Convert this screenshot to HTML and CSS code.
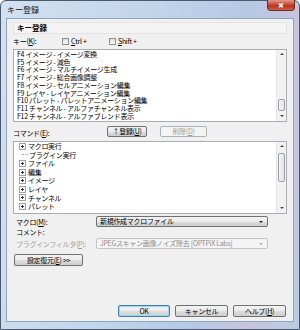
FILE: index.html
```html
<!DOCTYPE html>
<html lang="ja">
<head>
    <meta charset="UTF-8">
    <title>キー登録</title>
    <link rel="stylesheet" href="styles.css">
</head>
<body>
    <div class="window">
        <div class="titlebar">
            <span class="title">キー登録</span>
            <span class="close-btn">&#10006;</span>
        </div>
        <div class="client">
            <div class="caption">キー登録</div>

            <div class="key-row">
                <span class="label">キー(<u>K</u>):</span>
                <span class="check"><span class="box"></span><u>C</u>trl +</span>
                <span class="check"><span class="box"></span><u>S</u>hift +</span>
            </div>

            <div class="listbox">
                <div class="items">
                    <div>F4 イメージ - イメージ変換</div>
                    <div>F5 イメージ - 減色</div>
                    <div>F6 イメージ - マルチイメージ生成</div>
                    <div>F7 イメージ - 総合画像調整</div>
                    <div>F8 イメージ - セルアニメーション編集</div>
                    <div>F9 レイヤ - レイヤアニメーション編集</div>
                    <div>F10 パレット - パレットアニメーション編集</div>
                    <div>F11 チャンネル - アルファチャンネル表示</div>
                    <div>F12 チャンネル - アルファブレンド表示</div>
                </div>
                <div class="vscroll">
                    <span class="arrow up"></span>
                    <span class="track"><span class="thumb thumb-bottom"></span></span>
                    <span class="arrow down"></span>
                </div>
            </div>

            <div class="cmd-row">
                <span class="label">コマンド(<u>E</u>):</span>
                <span class="btn btn-add">↑登録(<u>U</u>)</span>
                <span class="btn btn-del disabled">削除(<u>D</u>)</span>
            </div>

            <div class="listbox tree">
                <div class="items">
                    <div class="node"><span class="plus"></span>マクロ実行</div>
                    <div class="node"><span class="leaf"></span>プラグイン実行</div>
                    <div class="node"><span class="plus"></span>ファイル</div>
                    <div class="node"><span class="plus"></span>編集</div>
                    <div class="node"><span class="plus"></span>イメージ</div>
                    <div class="node"><span class="plus"></span>レイヤ</div>
                    <div class="node"><span class="plus"></span>チャンネル</div>
                    <div class="node"><span class="plus"></span>パレット</div>
                </div>
                <div class="vscroll">
                    <span class="arrow up"></span>
                    <span class="track"><span class="thumb thumb-top"></span></span>
                    <span class="arrow down"></span>
                </div>
            </div>

            <div class="form-row first">
                <span class="flabel">マクロ(<u>M</u>):</span>
                <span class="combo">新規作成マクロファイル<span class="drop"></span></span>
            </div>
            <div class="form-row comment">
                <span class="flabel">コメント:</span>
            </div>
            <div class="form-row">
                <span class="flabel disabled">プラグインフィルタ(<u>P</u>):</span>
                <span class="combo disabled">JPEGスキャン画像ノイズ除去 [OPTPiX Labs]<span class="drop"></span></span>
            </div>

            <div class="restore-row">
                <span class="btn btn-restore">設定復元(<u>E</u>) &gt;&gt;</span>
            </div>

            <div class="footer">
                <span class="btn btn-ok">OK</span>
                <span class="btn btn-foot">キャンセル</span>
                <span class="btn btn-foot">ヘルプ(<u>H</u>)</span>
            </div>
        </div>
    </div>
</body>
</html>
```

FILE: styles.css
```css
body {
    margin: 0;
    padding: 0;
    font-family: "Noto Sans CJK JP", "Liberation Sans", sans-serif;
    font-size: 7px;
    letter-spacing: -0.3px;
    color: #000;
    background: #fff;
}

u {
    text-decoration: underline;
}

.window {
    width: 300px;
    height: 330px;
    box-sizing: border-box;
    border: 1px solid #4b5a6e;
    border-radius: 6px 6px 0 0;
    background: linear-gradient(100deg, #d3e1f0 0%, #c2d6ec 40%, #b5c9e4 70%, #c9c3de 85%, #b9cde6 100%);
    display: flex;
    flex-direction: column;
    position: relative;
}

.titlebar {
    height: 17px;
    position: relative;
}

.title {
    position: absolute;
    left: 6px;
    top: 3px;
    font-size: 8px;
    letter-spacing: 0;
    color: #111;
}

/* close button sits over the frame */
.close-btn {
    position: absolute;
    right: 4px;
    top: -1px;
    width: 28px;
    height: 11px;
    box-sizing: border-box;
    border: 1px solid #6d2d23;
    border-top: none;
    border-radius: 0 0 4px 4px;
    background: linear-gradient(#e09a8c, #c94a38 45%, #b8331f 60%, #d0604a);
    color: #fff;
    font-size: 7px;
    line-height: 10px;
    text-align: center;
}

.client {
    flex: 1;
    margin: 0 5px 7px 5px;
    border: 1px solid #8ea4bf;
    background: #f0f0f0;
    display: flex;
    flex-direction: column;
    padding: 3px 6px 4px 6px;
    box-sizing: border-box;
}

.caption {
    height: 10px;
    line-height: 10px;
    border: 1px solid #e3e3e3;
    background: #f4f4f4;
    padding-left: 3px;
    font-weight: bold;
    font-size: 7.5px;
    letter-spacing: 0;
}

.key-row {
    display: flex;
    align-items: flex-end;
    height: 10px;
    margin-top: 2px;
}

.key-row .label {
    width: 49px;
}

.check {
    display: flex;
    align-items: center;
    width: 47px;
}

.box {
    width: 5px;
    height: 5px;
    border: 1px solid #8f8f8f;
    background: linear-gradient(#dcdcdc, #fbfbfb);
    margin-right: 2px;
}

.listbox {
    margin-top: 3px;
    height: 73px;
    box-sizing: border-box;
    border: 1px solid #abadb3;
    background: #fff;
    display: flex;
}

.items {
    flex: 1;
    padding: 1px 0 0 3px;
    line-height: 7.7px;
    overflow: hidden;
    white-space: nowrap;
}

.vscroll {
    width: 9px;
    background: #f2f2f2;
    border-left: 1px solid #e6e6e6;
    display: flex;
    flex-direction: column;
}

.arrow {
    height: 9px;
    position: relative;
}

.arrow::after {
    content: "";
    position: absolute;
    left: 3px;
    top: 3px;
    border-left: 2px solid transparent;
    border-right: 2px solid transparent;
}

.arrow.up::after {
    border-bottom: 2px solid #444;
}

.arrow.down::after {
    border-top: 2px solid #444;
}

.track {
    flex: 1;
    display: flex;
    flex-direction: column;
}

.thumb {
    height: 10px;
    margin: 0 1px;
    border: 1px solid #9aa0a8;
    border-radius: 2px;
    background: linear-gradient(90deg, #f3f3f3, #e3e3e3);
}

.thumb-bottom {
    margin-top: auto;
    margin-bottom: 1px;
}

.thumb-top {
    height: 27px;
    margin-top: 2px;
}

.cmd-row {
    display: flex;
    align-items: flex-end;
    margin-top: 4px;
    height: 11px;
}

.cmd-row .label {
    width: 94px;
    line-height: 8px;
}

.btn {
    box-sizing: border-box;
    height: 11px;
    border: 1px solid #707070;
    border-radius: 2px;
    background: linear-gradient(#f2f2f2 0%, #ebebeb 50%, #dddddd 51%, #cfcfcf 100%);
    display: flex;
    align-items: center;
    justify-content: center;
    line-height: 9px;
    white-space: nowrap;
}

.btn-add {
    width: 40px;
}

.btn-del {
    width: 47px;
    margin-left: 13px;
}

.btn.disabled {
    border-color: #adb2b5;
    background: #f4f4f4;
    color: #a0a0a0;
}

.tree {
    margin-top: 4px;
}

.tree .items {
    line-height: 8.6px;
    padding-left: 5px;
    padding-top: 0;
}

.node {
    display: flex;
    align-items: center;
}

.plus {
    width: 5px;
    height: 5px;
    border: 1px solid #a0a0a0;
    margin-right: 2px;
    position: relative;
    background: #fff;
}

.plus::before {
    content: "";
    position: absolute;
    left: 1px;
    top: 2px;
    width: 3px;
    height: 1px;
    background: #333;
}

.plus::after {
    content: "";
    position: absolute;
    left: 2px;
    top: 1px;
    width: 1px;
    height: 3px;
    background: #333;
}

.leaf {
    width: 6px;
    height: 1px;
    margin-left: 3px;
    margin-right: 1px;
    border-top: 1px dotted #a0a0a0;
}

.form-row {
    display: flex;
    align-items: center;
    height: 11px;
    padding-left: 3px;
}

.form-row.first {
    margin-top: 2px;
}

.form-row.comment {
    height: 10px;
    margin-bottom: 1px;
}

.flabel {
    width: 80px;
}

.flabel.disabled {
    color: #a0a0a0;
}

.combo {
    width: 172px;
    height: 11px;
    box-sizing: border-box;
    border: 1px solid #707070;
    border-radius: 2px;
    background: linear-gradient(#f2f2f2 0%, #ebebeb 50%, #dddddd 51%, #cfcfcf 100%);
    padding-left: 3px;
    line-height: 9px;
    position: relative;
    white-space: nowrap;
}

.combo.disabled {
    border-color: #c4c4c4;
    background: #f4f4f4;
    color: #8d8d8d;
}

.drop {
    position: absolute;
    right: 4px;
    top: 4px;
    border-left: 2px solid transparent;
    border-right: 2px solid transparent;
    border-top: 2px solid #222;
}

.combo.disabled .drop {
    border-top-color: #aaa;
}

.restore-row {
    margin-top: 5px;
    display: flex;
}

.btn-restore {
    width: 69px;
    height: 12px;
    margin-left: 1px;
}

.footer {
    margin-top: auto;
    display: flex;
    justify-content: flex-end;
    gap: 5px;
    padding-right: 1px;
}

.btn-ok {
    width: 52px;
    height: 12px;
    border-color: #3c7fb1;
    box-shadow: inset 0 0 0 1px #9fd6f5;
}

.btn-foot {
    width: 53px;
    height: 12px;
}
```
